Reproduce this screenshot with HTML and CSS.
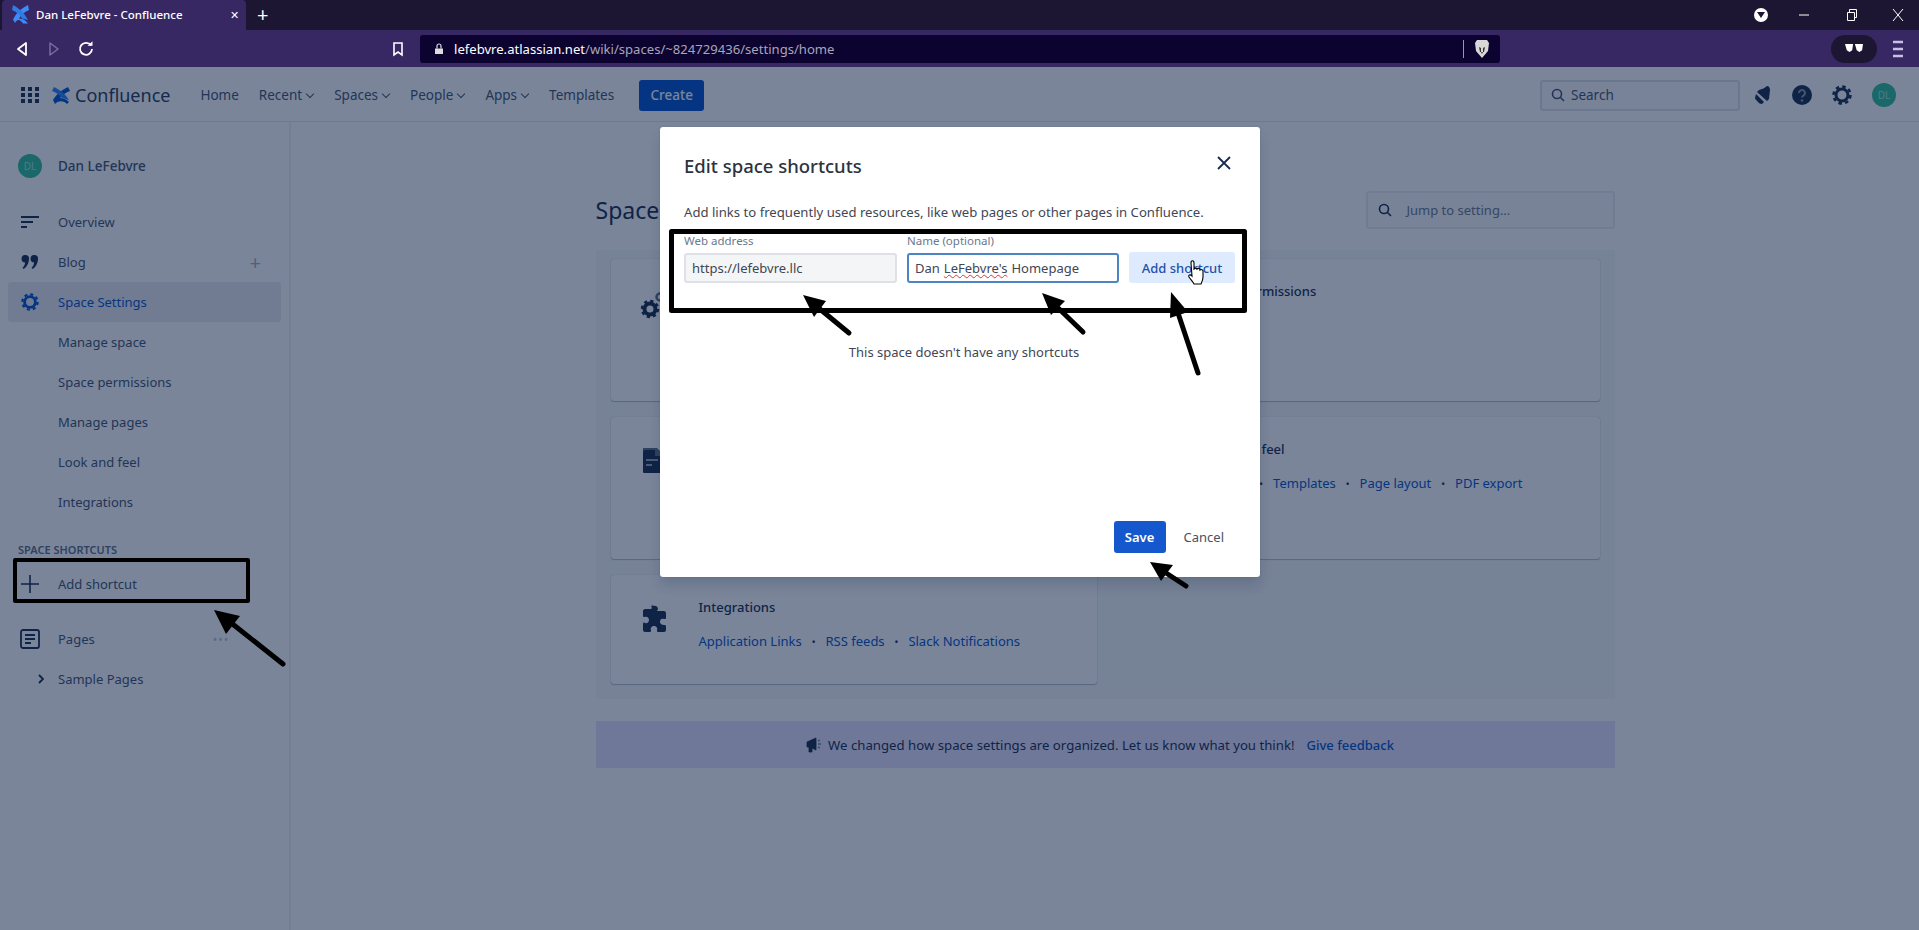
FILE: index.html
```html
<!DOCTYPE html>
<html lang="en">
<head>
    <meta charset="UTF-8">
    <title>Dan LeFebvre - Confluence</title>
    <link rel="stylesheet" href="styles.css">
</head>
<body>
    <div class="tabstrip">
        <div class="tab">
            <svg class="tab-logo" width="17" height="20" viewBox="0 0 17 20"><path d="M1 15.500C4 10 7 6 16 1l1 5c-5 2-8 5-10 8.500 3 0 6 1 9 5H11C8 15 5 15 3 19z" fill="#3d8bf5"/><path d="M16 16C13 10.500 10 6 1 1L0 6c5 2 8 5 10 8.500z" fill="#2f7ae5"/></svg>
            <span class="tab-title">Dan LeFebvre - Confluence</span>
            <span class="tab-close">&#x2715;</span>
        </div>
        <span class="tab-new">+</span>
        <div class="win-controls">
            <span class="win-badge"><svg width="8" height="6" viewBox="0 0 8 6"><path d="M0 0h8L4 6z" fill="#1c1633"/></svg></span>
            <svg class="win-min" width="12" height="12" viewBox="0 0 12 12"><path d="M1 6h10" stroke="#fff" stroke-width="1"/></svg>
            <svg class="win-max" width="12" height="14" viewBox="0 0 12 14"><path d="M1.500 4.500h7v8h-7zM3.500 4.500v-3h7v8H8.500" fill="none" stroke="#fff"/></svg>
            <svg class="win-close" width="12" height="14" viewBox="0 0 12 14"><path d="M1 1l10 12M11 1L1 13" stroke="#fff"/></svg>
        </div>
    </div>

    <div class="toolbar">
        <svg class="tb-back" width="12" height="16" viewBox="0 0 12 16"><path d="M10 2v12L2 8z" fill="none" stroke="#fff" stroke-width="1.800" stroke-linejoin="round"/></svg>
        <svg class="tb-forward" width="12" height="16" viewBox="0 0 12 16"><path d="M2 2v12l8-6z" fill="none" stroke="#7a6ea0" stroke-width="1.500" stroke-linejoin="round"/></svg>
        <svg class="tb-reload" width="16" height="16" viewBox="0 0 16 16"><path d="M13 4.500A6 6 0 1 0 14 8" fill="none" stroke="#fff" stroke-width="1.800"/><path d="M9.500 4.800h5v-4.500z" fill="#fff"/></svg>
        <svg class="tb-bookmark" width="12" height="16" viewBox="0 0 12 16"><path d="M2 2h8v12L6 11l-4 3z" fill="none" stroke="#fff" stroke-width="1.600"/></svg>
        <div class="urlbar">
            <svg width="10" height="12" viewBox="0 0 10 12"><path d="M1 5.500h8V11H1z" fill="#ddd"/><path d="M3 5.500V3a2 2 0 0 1 4 0v2.500" fill="none" stroke="#ddd" stroke-width="1.200"/></svg>
            <span class="url-text"><b>lefebvre.atlassian.net</b>/wiki/spaces/~824729436/settings/home</span>
            <span class="url-sep"></span>
            <svg class="url-brave" width="16" height="20" viewBox="0 0 16 20"><path d="M3 1h10l2 3-1 8-6 7-6-7-1-8z" fill="#d8d8d8"/><path d="M5 8l2 1v4l1 2 1-2V9l2-1-1 5H6z" fill="#333"/></svg>
        </div>
        <div class="tb-shades"><svg width="18" height="9" viewBox="0 0 20 10"><path d="M0 0h9l-1 7-3 2-3-2zM11 0h9l-1 7-3 2-3-2z" fill="#fff"/></svg></div>
        <svg class="tb-menu" width="12" height="18" viewBox="0 0 12 18"><path d="M1 2h10M1 9h10M1 16h10" stroke="#c9bfe6" stroke-width="2.400"/></svg>
    </div>

    <div class="app">
        <header class="topnav">
            <svg class="grid-icon" width="18" height="16" viewBox="0 0 18 16"><g fill="#1d2c4c"><rect width="4" height="4"/><rect x="7" width="4" height="4"/><rect x="14" width="4" height="4"/><rect y="6" width="4" height="4"/><rect x="7" y="6" width="4" height="4"/><rect x="14" y="6" width="4" height="4"/><rect y="12" width="4" height="4"/><rect x="7" y="12" width="4" height="4"/><rect x="14" y="12" width="4" height="4"/></g></svg>
            <svg class="conf-logo" width="18" height="18" viewBox="0 0 18 18"><path d="M1 14C4 9 8 5 16 1l2 4c-5 2-8 4-10 7 3 0 6 1 9 4l-2 2c-3-3-8-4-12 0z" fill="#0052cc"/><path d="M17 14c-3-5-7-9-15-13L0 5c5 2 8 4 10 7z" fill="#2684ff"/></svg>
            <span class="conf-name">Confluence</span>
            <nav class="nav-links">
                <a>Home</a>
                <a class="has-caret">Recent</a>
                <a class="has-caret">Spaces</a>
                <a class="has-caret">People</a>
                <a class="has-caret">Apps</a>
                <a>Templates</a>
            </nav>
            <button class="btn-create">Create</button>
            <div class="nav-right">
                <div class="nav-search">
                    <svg width="14" height="14" viewBox="0 0 14 14"><circle cx="6" cy="6" r="4.500" fill="none" stroke="#42526e" stroke-width="1.600"/><path d="M9.500 9.500L13 13" stroke="#42526e" stroke-width="1.600"/></svg>
                    <span>Search</span>
                </div>
                <svg class="nav-bell" width="20" height="20" viewBox="0 0 20 20"><path d="M14 1c2 0 3 2 3 4l-1 9-2 2L4 7l2-2c3-1 6-2 8-4z" fill="#172b4d"/><path d="M3 9l8 8-2 2c-2 0-3-1-4-2s-3-3-3-4z" fill="#172b4d"/></svg>
                <svg class="nav-help" width="20" height="20" viewBox="0 0 20 20"><circle cx="10" cy="10" r="10" fill="#172b4d"/><path d="M7 8a3 3 0 1 1 4.500 2.600c-1 .6-1.500 1-1.500 2" fill="none" stroke="#8c96a8" stroke-width="2"/><circle cx="10" cy="15.500" r="1.300" fill="#8c96a8"/></svg>
                <svg class="nav-gear" width="20" height="20" viewBox="0 0 20 20"><circle cx="10" cy="10" r="6" fill="none" stroke="#172b4d" stroke-width="3"/><circle cx="10" cy="10" r="8.500" fill="none" stroke="#172b4d" stroke-width="2.500" stroke-dasharray="3.500 3.170"/></svg>
                <span class="avatar">DL</span>
            </div>
        </header>

        <div class="page">
            <aside class="sidebar">
                <div class="space-name"><span class="avatar">DL</span><strong>Dan LeFebvre</strong></div>
                <div class="side-item">
                    <svg class="side-icon" width="18" height="12" viewBox="0 0 18 12"><path d="M0 1h18M0 6h12M0 11h6" stroke="#172b4d" stroke-width="2"/></svg>
                    <span>Overview</span>
                </div>
                <div class="side-item">
                    <svg class="side-icon" width="16" height="14" viewBox="0 0 16 14"><path d="M3.500 0a3.500 3.500 0 0 1 3.500 3.500c0 5-2.500 9-5.500 10.500l-1-1.200c1.500-1.300 2.500-3 2.600-5.300A3.500 3.500 0 0 1 3.500 0zM12.500 0a3.500 3.500 0 0 1 3.500 3.500c0 5-2.500 9-5.500 10.500l-1-1.200c1.500-1.300 2.500-3 2.600-5.300A3.500 3.500 0 0 1 12.500 0z" fill="#172b4d"/></svg>
                    <span>Blog</span>
                    <span class="side-plus">+</span>
                </div>
                <div class="side-item is-active">
                    <svg class="side-icon" width="18" height="18" viewBox="0 0 20 20"><circle cx="10" cy="10" r="6" fill="none" stroke="#0052cc" stroke-width="3.200"/><circle cx="10" cy="10" r="8.500" fill="none" stroke="#0052cc" stroke-width="2.500" stroke-dasharray="3.500 3.170"/></svg>
                    <span>Space Settings</span>
                </div>
                <div class="side-item"><i class="side-icon"></i><span>Manage space</span></div>
                <div class="side-item"><i class="side-icon"></i><span>Space permissions</span></div>
                <div class="side-item"><i class="side-icon"></i><span>Manage pages</span></div>
                <div class="side-item"><i class="side-icon"></i><span>Look and feel</span></div>
                <div class="side-item"><i class="side-icon"></i><span>Integrations</span></div>
                <div class="side-label">SPACE SHORTCUTS</div>
                <div class="side-item">
                    <svg class="side-icon" width="18" height="18" viewBox="0 0 18 18"><path d="M9 0v18M0 9h18" stroke="#172b4d" stroke-width="1.600"/></svg>
                    <span>Add shortcut</span>
                </div>
                <div class="side-item side-pages">
                    <svg class="side-icon" width="20" height="20" viewBox="0 0 20 20"><rect x="1" y="1" width="18" height="18" rx="2" fill="none" stroke="#172b4d" stroke-width="1.800"/><path d="M5 6h10M5 10h10M5 14h6" stroke="#172b4d" stroke-width="1.800"/></svg>
                    <span>Pages</span>
                    <span class="side-more">&#8226;&#8226;&#8226;</span>
                </div>
                <div class="side-item">
                    <i class="side-icon side-caret"><svg width="6" height="10" viewBox="0 0 6 10"><path d="M1 1l4 4-4 4" fill="none" stroke="#172b4d" stroke-width="1.800"/></svg></i>
                    <span>Sample Pages</span>
                </div>
            </aside>

            <main class="content">
                <div class="content-inner">
                    <div class="content-head">
                        <h1>Space</h1>
                        <div class="jump-search">
                            <svg width="14" height="14" viewBox="0 0 14 14"><circle cx="6" cy="6" r="4.500" fill="none" stroke="#172b4d" stroke-width="1.600"/><path d="M9.500 9.500L13 13" stroke="#172b4d" stroke-width="1.600"/></svg>
                            <span>Jump to setting...</span>
                        </div>
                    </div>
                    <div class="cards">
                        <section class="card">
                            <svg class="card-icon" width="32" height="32" viewBox="0 0 32 32"><circle cx="11" cy="22" r="5.500" fill="none" stroke="#172b4d" stroke-width="4"/><circle cx="11" cy="22" r="8" fill="none" stroke="#172b4d" stroke-width="2.500" stroke-dasharray="3.200 3.080"/><circle cx="21" cy="10" r="3.500" fill="none" stroke="#5e6c84" stroke-width="2.500"/></svg>
                        </section>
                        <section class="card">
                            <svg class="card-icon" width="32" height="32" viewBox="0 0 32 32"></svg>
                            <div class="card-body"><h3>Space permissions</h3></div>
                        </section>
                        <section class="card">
                            <svg class="card-icon" width="32" height="32" viewBox="0 0 32 32"><path d="M4 3h14l6 6v19H4z" fill="#5e6c84"/><path d="M4 7a2 2 0 0 1 2-2h10v6h6v17H6a2 2 0 0 1-2-2z" fill="#172b4d"/><path d="M7 15h12M7 20h6" stroke="#97a0af" stroke-width="2"/></svg>
                        </section>
                        <section class="card">
                            <svg class="card-icon" width="32" height="32" viewBox="0 0 32 32"></svg>
                            <div class="card-body">
                                <h3>Look and feel</h3>
                                <p class="card-links"><a>Themes</a><i>&#8226;</i><a>Templates</a><i>&#8226;</i><a>Page layout</a><i>&#8226;</i><a>PDF export</a></p>
                            </div>
                        </section>
                        <section class="card">
                            <svg class="card-icon" width="32" height="32" viewBox="0 0 32 32"><path d="M13 3c3-1 6 0 6 3l-1 2h7c1 0 2 1 2 2v5c0 1-1 1-2 1-3-1-4 1-4 3s2 3 4 3c1 0 2 0 2 1v4c0 1-1 2-2 2h-6c-1 0-1-1-1-2 1-2-1-4-3-4s-4 2-3 4c0 1 0 2-1 2H6c-1 0-2-1-2-2v-6c0-1 1-2 2-1 2 1 4-1 4-3s-2-4-4-3c-1 0-2 0-2-1v-5c0-1 1-2 2-2h6l1-1c-1-1-1-3 1-3z" fill="#172b4d"/></svg>
                            <div class="card-body">
                                <h3>Integrations</h3>
                                <p class="card-links"><a>Application Links</a><i>&#8226;</i><a>RSS feeds</a><i>&#8226;</i><a>Slack Notifications</a></p>
                            </div>
                        </section>
                    </div>
                    <div class="feedback">
                        <svg width="16" height="16" viewBox="0 0 16 16"><path d="M1 5l9-4v12L6 11v4H3v-5H1zM12 4l2-1M12 7h3M12 10l2 1" fill="#172b4d" stroke="#172b4d" stroke-width=".8"/></svg>
                        <span>We changed how space settings are organized. Let us know what you think!</span>
                        <a>Give feedback</a>
                    </div>
                </div>
            </main>
        </div>

        <div class="blanket"></div>

        <div class="modal">
            <div class="modal-head">
                <h2>Edit space shortcuts</h2>
                <svg width="16" height="16" viewBox="0 0 16 16"><path d="M2 2l12 12M14 2L2 14" stroke="#172b4d" stroke-width="1.800"/></svg>
            </div>
            <p class="modal-desc">Add links to frequently used resources, like web pages or other pages in Confluence.</p>
            <div class="shortcut-form">
                <div class="field field-url">
                    <label>Web address</label>
                    <div class="text-input">https://lefebvre.llc</div>
                </div>
                <div class="field field-name">
                    <label>Name (optional)</label>
                    <div class="text-input is-focus">Dan <span class="spell">LeFebvre's</span> Homepage</div>
                </div>
                <button class="btn-add">Add shortcut</button>
            </div>
            <p class="modal-empty">This space doesn't have any shortcuts</p>
            <div class="modal-foot">
                <button class="btn-save">Save</button>
                <a class="btn-cancel">Cancel</a>
            </div>
        </div>
    </div>

    <!-- drawn on top of the recording -->
    <svg class="marks" width="1919" height="930" viewBox="0 0 1919 930">
        <g fill="none" stroke="#000" stroke-linejoin="round">
            <rect x="15" y="560" width="233" height="41" stroke-width="4"/>
            <rect x="671.500" y="231.500" width="573" height="79" stroke-width="5"/>
        </g>
        <g stroke="#000" stroke-width="5" stroke-linecap="round">
            <path d="M230 622L283 664"/>
            <path d="M815 305L849 333"/>
            <path d="M1054 304L1083 332"/>
            <path d="M1177 310L1198 373"/>
            <path d="M1163 571L1186 586"/>
        </g>
        <g fill="#000">
            <path d="M214 610L240 616 226 634z"/>
            <path d="M803 295L826 301 814 317z"/>
            <path d="M1042 293L1065 301 1051 315z"/>
            <path d="M1171 292L1188 312 1170 318z"/>
            <path d="M1150 562L1173 565 1161 581z"/>
        </g>
        <path d="M1191 263c0-3 3-3 3 0v6c1-1 3-1 3 0 1-1 3-1 3 1 1-1 3 0 3 1v6c0 3-1 5-2 7h-7c-1-2-3-4-5-7-1-2 1-3 3-1z" fill="#fff" stroke="#000" stroke-width="1.100"/>
    </svg>
</body>
</html>
```
FILE: styles.css
```css
* {
    box-sizing: border-box;
}

html, body {
    margin: 0;
    height: 930px;
    overflow: hidden;
}

body {
    position: relative;
    font-family: "Noto Sans", "Open Sans", sans-serif;
    font-size: 13px;
    color: #172b4d;
    background-color: #fff;
}

h1, h2, h3, p {
    margin: 0;
    font-weight: normal;
}

/* browser frame */
.tabstrip {
    display: flex;
    align-items: center;
    height: 30px;
    background-color: #1c1633;
    color: #fff;
}

.tab {
    display: flex;
    align-items: center;
    width: 244px;
    height: 30px;
    margin-left: 2px;
    padding: 0 7px 2px 10px;
    background-color: #372763;
    border-radius: 4px 4px 0 0;
}

.tab-title {
    flex: 1;
    margin-left: 7px;
    font-size: 11.500px;
    font-weight: 500;
}

.tab-close {
    font-size: 11px;
}

.tab-new {
    margin-left: 11px;
    font-size: 20px;
    line-height: 20px;
}

.win-controls {
    display: flex;
    align-items: center;
    margin-left: auto;
    padding-right: 15px;
}

.win-badge {
    display: flex;
    align-items: center;
    justify-content: center;
    width: 14px;
    height: 14px;
    background-color: #fff;
    border-radius: 50%;
}

.win-min {
    margin-left: 30px;
}

.win-max {
    margin-left: 36px;
}

.win-close {
    margin-left: 34px;
}

.toolbar {
    display: flex;
    align-items: center;
    height: 37px;
    padding-left: 16px;
    background-color: #372763;
}

.tb-forward {
    margin-left: 20px;
}

.tb-reload {
    margin-left: 18px;
}

.tb-bookmark {
    margin-left: 298px;
}

.urlbar {
    display: flex;
    align-items: center;
    width: 1080px;
    height: 28px;
    margin-left: 16px;
    padding-left: 14px;
    background-color: #0c0330;
    border-radius: 3px;
}

.url-text {
    margin-left: 10px;
    font-size: 13.100px;
    color: #a9a5b8;
}

.url-text b {
    font-weight: 400;
    color: #fff;
}

.url-sep {
    width: 1px;
    height: 18px;
    margin-left: auto;
    background-color: #9b97ab;
}

.url-brave {
    margin: 0 10px;
}

.tb-shades {
    display: flex;
    align-items: center;
    justify-content: center;
    width: 46px;
    height: 28px;
    margin-left: 331px;
    background-color: #1c1633;
    border-radius: 14px;
}

.tb-menu {
    margin-left: 15px;
}

/* confluence page */
.app {
    position: relative;
    height: 863px;
    overflow: hidden;
}

.topnav {
    display: flex;
    align-items: center;
    height: 55px;
    padding: 2px 23px 0 21px;
    font-size: 13.500px;
    color: #42526e;
    border-bottom: 1px solid #e6e8ec;
}

.conf-logo {
    margin-left: 13px;
}

.conf-name {
    margin-left: 5px;
    font-size: 18px;
    color: #253858;
}

.nav-links {
    display: flex;
    gap: 20px;
    margin-left: 30px;
}

.has-caret::after {
    content: "";
    display: inline-block;
    width: 5px;
    height: 5px;
    margin: 0 1px 3px 5px;
    border-right: 1px solid #42526e;
    border-bottom: 1px solid #42526e;
    transform: rotate(45deg);
}

.btn-create {
    height: 31px;
    width: 65px;
    margin-left: 25px;
    font: 500 13.500px "Noto Sans", sans-serif;
    color: #fff;
    background-color: #0052cc;
    border: 0;
    border-radius: 3px;
}

.nav-right {
    display: flex;
    align-items: center;
    margin-left: auto;
}

.nav-search {
    display: flex;
    align-items: center;
    gap: 6px;
    width: 200px;
    height: 31px;
    padding-left: 9px;
    background-color: #fafbfc;
    border: 2px solid #dfe1e6;
    border-radius: 3px;
}

.nav-bell {
    margin-left: 13px;
}

.nav-help {
    margin-left: 19px;
}

.nav-gear {
    margin-left: 20px;
}

.nav-right .avatar {
    margin-left: 20px;
}

.avatar {
    display: inline-flex;
    align-items: center;
    justify-content: center;
    width: 24px;
    height: 24px;
    font-size: 10px;
    color: #9fe6d6;
    background-color: #30c09a;
    border-radius: 50%;
}

.page {
    display: flex;
    height: 808px;
}

.sidebar {
    flex: none;
    width: 291px;
    padding: 32px 8px 0;
    background-color: #fff;
    border-right: 2px solid #f1f2f4;
}

.space-name {
    display: flex;
    align-items: center;
    gap: 16px;
    height: 24px;
    margin: 0 0 24px 10px;
}

.space-name strong {
    font-weight: 500;
    font-size: 13.500px;
    color: #42526e;
}

.side-item {
    display: flex;
    align-items: center;
    height: 40px;
    padding-left: 10px;
    color: #42526e;
    border-radius: 3px;
}

.side-icon {
    flex: none;
    width: 24px;
    margin-right: 16px;
}

.side-caret {
    display: flex;
    justify-content: flex-end;
    padding-right: 0;
    transform: translateX(2px);
}

.side-item.is-active {
    color: #0052cc;
    background-color: #ebecf0;
}

.side-plus {
    margin-left: auto;
    padding-right: 20px;
    font-size: 20px;
    color: #a5adba;
}

.side-more {
    margin-left: 118px;
    letter-spacing: 1px;
    font-size: 12px;
    color: #c1c7d0;
}

.side-label {
    margin: 20px 0 6px 10px;
    height: 16px;
    font-size: 11px;
    line-height: 16px;
    font-weight: 600;
    color: #5e6c84;
}

.side-pages {
    margin: 15px 0 0;
}

.content {
    flex: 1;
}

.content-inner {
    width: 1019px;
    margin: 0 auto;
}

.content-head {
    display: flex;
    align-items: center;
    justify-content: space-between;
    height: 38px;
    margin-top: 69px;
}

.content-head h1 {
    font-size: 23px;
    color: #172b4d;
}

.jump-search {
    display: flex;
    align-items: center;
    gap: 15px;
    width: 249px;
    height: 38px;
    padding-left: 10px;
    color: #6b778c;
    background-color: #fafbfc;
    border: 2px solid #ebecf0;
    border-radius: 3px;
}

.cards {
    display: grid;
    grid-template-columns: 1fr 1fr;
    grid-template-rows: 142px 142px 109px;
    gap: 16px;
    margin-top: 21px;
    padding: 9px 15px 15px;
    background-color: #f7f8f9;
}

.card {
    display: flex;
    padding: 22px 16px 0 28px;
    background-color: #fff;
    border-radius: 3px;
    box-shadow: 0 1px 1px rgba(9, 30, 66, .25), 0 0 1px rgba(9, 30, 66, .31);
}

.card-icon {
    flex: none;
    margin: 6px 28px 0 0;
}

.card-body h3 {
    height: 20px;
    font-size: 13px;
    line-height: 20px;
    font-weight: 500;
    color: #172b4d;
}

.card-links {
    margin-top: 14px;
    line-height: 20px;
    color: #0052cc;
    white-space: nowrap;
}

.card-links i {
    margin: 0 10px;
    font-style: normal;
    font-size: 10px;
    color: #172b4d;
}

.feedback {
    display: flex;
    align-items: center;
    justify-content: center;
    gap: 6px;
    height: 47px;
    margin-top: 22px;
    padding-right: 10px;
    font-size: 13.200px;
    color: #172b4d;
    background-color: #e6e3fc;
}

.feedback a {
    margin-left: 6px;
    font-size: 13px;
    font-weight: 500;
    color: #0052cc;
}

.blanket {
    position: absolute;
    inset: 0;
    background-color: rgba(9, 30, 66, .54);
}

.modal {
    position: absolute;
    left: 660px;
    top: 60px;
    display: flex;
    flex-direction: column;
    width: 600px;
    height: 450px;
    padding: 0 24px 24px;
    background-color: #fff;
    border-radius: 3px;
    box-shadow: 0 0 1px rgba(9, 30, 66, .31), 0 8px 12px rgba(9, 30, 66, .15);
}

.modal-head {
    display: flex;
    align-items: center;
    justify-content: space-between;
    height: 64px;
    padding: 13px 0 0;
}

.modal-head svg {
    margin: 0 4px 5px 0;
}

.modal-head h2 {
    font-size: 18.500px;
    font-weight: 500;
    color: #2c3340;
}

.modal-desc {
    margin-top: 11px;
    height: 20px;
    font-size: 13.130px;
    line-height: 20px;
    color: #3f4654;
    white-space: nowrap;
}

.shortcut-form {
    display: flex;
    align-items: flex-end;
    gap: 10px;
    margin-top: 11px;
}

.field label {
    display: block;
    height: 20px;
    font-size: 11.500px;
    line-height: 15px;
    color: #6b778c;
}

.field-url {
    width: 213px;
}

.field-name {
    width: 212px;
}

.text-input {
    display: flex;
    align-items: center;
    gap: 4px;
    height: 30px;
    padding-left: 6px;
    color: #3f4654;
    background-color: #f4f5f7;
    border: 2px solid #dfe1e6;
    border-radius: 3px;
    white-space: nowrap;
}

.text-input.is-focus {
    background-color: #fff;
    border-color: #4c84c4;
}

.spell {
    text-decoration: underline wavy #d33;
    text-decoration-thickness: 1px;
}

.btn-add {
    width: 106px;
    height: 31px;
    font: 500 13px "Noto Sans", sans-serif;
    color: #1f52a8;
    background-color: #deebff;
    border: 0;
    border-radius: 3px;
}

.modal-empty {
    margin-top: 59px;
    padding-left: 8px;
    height: 20px;
    line-height: 20px;
    text-align: center;
    color: #3f4654;
}

.modal-foot {
    display: flex;
    align-items: center;
    justify-content: flex-end;
    gap: 17px;
    margin-top: auto;
    padding-right: 12px;
}

.btn-save {
    width: 52px;
    height: 32px;
    margin-right: 1px;
    font: 600 13px "Noto Sans", sans-serif;
    color: #fff;
    background-color: #1558cd;
    border: 0;
    border-radius: 3px;
}

.btn-cancel {
    color: #4a5160;
}

.marks {
    position: absolute;
    left: 0;
    top: 0;
}
```
